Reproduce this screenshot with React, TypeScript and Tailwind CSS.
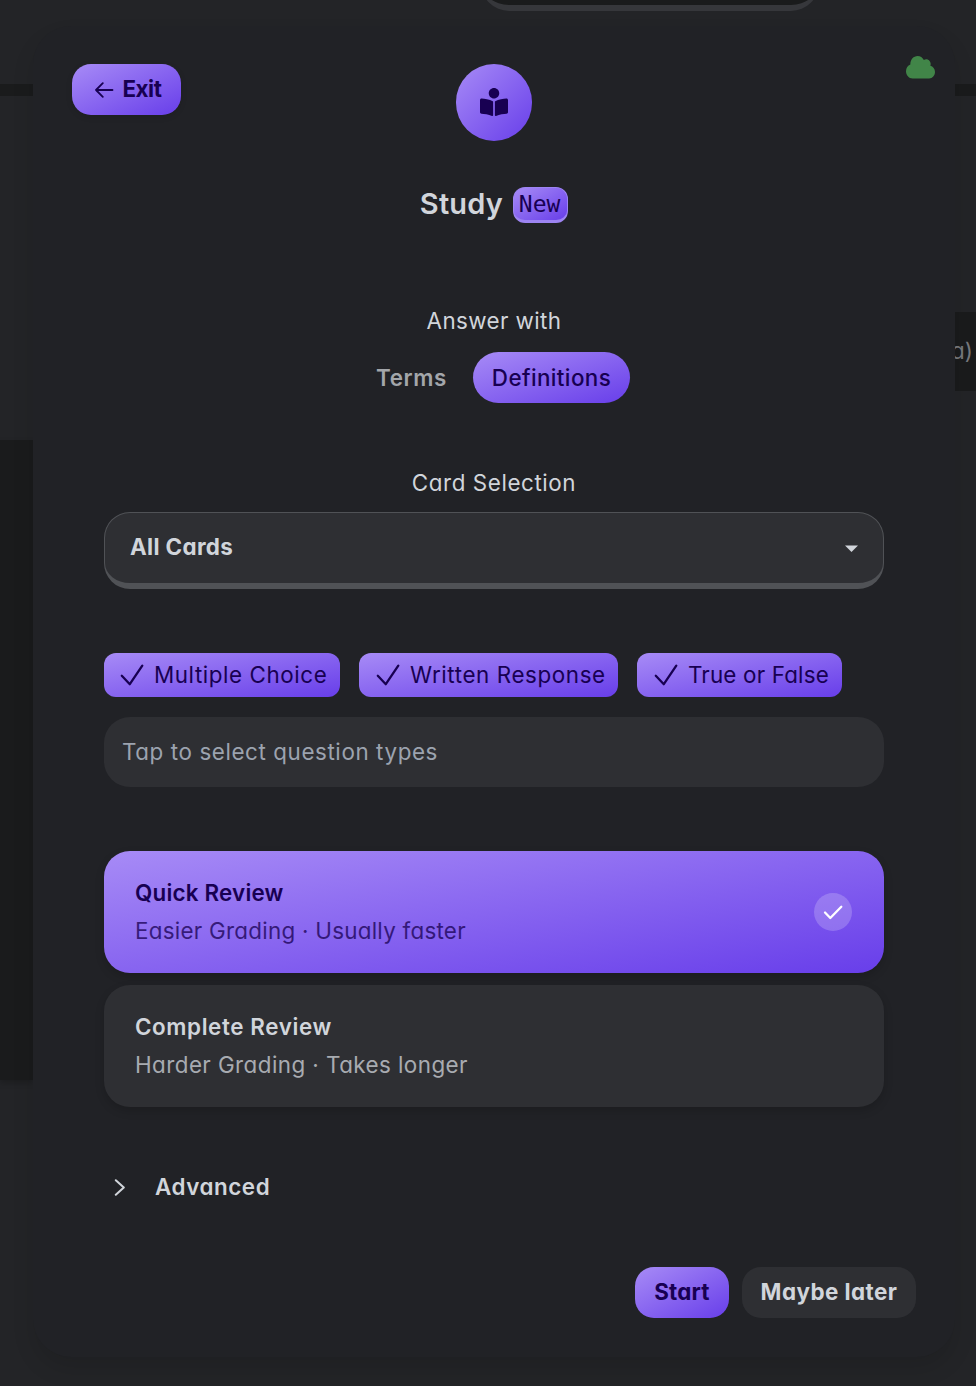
import { FaBookReader } from "react-icons/fa";

const GRADIENT = "bg-linear-to-br/srgb from-[#a78bf6] to-[#683eea] text-[#180052]";

function Tick() {
  return (
    <svg className="h-[22px] w-6 shrink-0" viewBox="0 0 24 22" fill="none" stroke="currentColor" strokeWidth="2.3" strokeLinecap="round" strokeLinejoin="round">
      <path d="M1.8 11.8 L9.8 20.2 L22.3 1.7" />
    </svg>
  );
}

function Chip({ label, className }: { label: string; className: string }) {
  return (
    <div className={`flex h-11 items-center gap-[10px] rounded-[12px] whitespace-nowrap ${GRADIENT} ${className}`}>
      <Tick />
      <span>{label}</span>
    </div>
  );
}

type OptionProps = {
  title: string;
  titleClass: string;
  note: string;
  noteClass: string;
  selected?: boolean;
};

function Option({ title, titleClass, note, noteClass, selected }: OptionProps) {
  return (
    <div className={`flex h-[122px] items-center justify-between rounded-[26px] pr-8 pl-[31px] shadow-[0_4px_10px_rgba(0,0,0,0.16)] ${selected ? GRADIENT : "bg-[#2e2f33] text-[#d1d5db]"}`}>
      <div className="flex flex-col gap-1 leading-[34px]">
        <div className={titleClass}>{title}</div>
        <div className={`opacity-75 ${noteClass}`}>{note}</div>
      </div>
      {selected && (
        <div className="flex size-[38px] items-center justify-center rounded-full bg-white/20 text-white">
          <svg className="mt-px h-[15px] w-[20px]" viewBox="0 0 20 15" fill="none" stroke="currentColor" strokeWidth="2.3" strokeLinecap="round" strokeLinejoin="round">
            <path d="M2 7.5 L7.3 13 L18.3 1.7" />
          </svg>
        </div>
      )}
    </div>
  );
}

function Backdrop() {
  return (
    <div className="absolute inset-0 flex justify-between">
      <div className="flex w-[33px] flex-col">
        <div className="mt-[84px] h-3 bg-[#1a1b1c]" />
        <div className="mt-[344px] h-[640px] bg-[#1a1b1c] shadow-[0_3px_6px_rgba(0,0,0,0.2)]" />
      </div>
      <div className="-mt-[60px] ml-[312px] h-[71px] w-[338px] rounded-[28px] border border-b-[6px] border-[#36373b] bg-[#1a1b1c]" />
      <div className="flex w-[21px] flex-col">
        <div className="mt-[84px] h-3 bg-[#1a1b1c]" />
        <div className="mt-[216px] flex h-[79px] items-center justify-end overflow-hidden bg-[#1a1b1c] pr-[3px] pb-0.5 text-[#77797d]">a)</div>
      </div>
    </div>
  );
}

export default function App() {
  return (
    <div className="relative h-[1386px] w-[976px] overflow-hidden bg-[#232427] pt-[26px] pl-[33px] font-['Inter',sans-serif] text-[22.4px] leading-[34px] text-[#d1d5db] [font-feature-settings:'cv11']">
      <Backdrop />
      <div className="relative flex h-[1331px] w-[922px] flex-col rounded-[38px] bg-[#212226] px-[39px] pt-[38px] shadow-[0_12px_22px_rgba(0,0,0,0.11)]">
        <header className="grid h-[77px] grid-cols-[1fr_76px_1fr] items-start">
          <button className={`flex h-[51px] w-[109px] items-center gap-[9px] rounded-[19px] pl-[21.5px] font-bold tracking-[-0.5px] shadow-[0_2px_6px_rgba(0,0,0,0.12)] ${GRADIENT}`}>
            <svg className="h-4 w-5 shrink-0" viewBox="0 0 20 16" fill="none" stroke="currentColor" strokeWidth="1.8" strokeLinecap="round" strokeLinejoin="round">
              <path d="M18.5 8 H2 M8.8 1.2 L2 8 L8.8 14.8" />
            </svg>
            <span className="pb-0.5">Exit</span>
          </button>
          <div className={`flex h-[77px] items-center justify-center rounded-full pb-px ${GRADIENT}`}>
            <FaBookReader size={28} />
          </div>
          <svg className="-mt-2 -mr-[18.5px] h-[22.5px] w-[29px] justify-self-end" viewBox="0 32 640 448" preserveAspectRatio="none">
            <path fill="#418548" d="M537.6 226.6c4.1-10.7 6.4-22.4 6.4-34.6 0-53-43-96-96-96-19.7 0-38.1 6-53.3 16.2C367 64.2 315.3 32 256 32c-88.4 0-160 71.6-160 160 0 2.7.1 5.4.2 8.1C40.2 219.8 0 273.2 0 336c0 79.5 64.5 144 144 144h368c70.7 0 128-57.3 128-128 0-61.9-44-113.6-102.4-125.4z" />
          </svg>
        </header>

        <div className="mt-[46px] flex h-9 items-center justify-center gap-[10px]">
          <h1 className="pb-0.5 text-[29px] font-semibold tracking-[0.2px]">Study</h1>
          <kbd className={`flex h-9 w-[55px] items-center justify-center rounded-[12px] border border-b-[3px] border-[#9d84f2] pr-0.5 font-['DejaVu_Sans_Mono',monospace] text-[23px] ${GRADIENT}`}>New</kbd>
        </div>

        <div className="mt-[81px] text-center tracking-[0.4px]">Answer with</div>
        <div className="mt-[14px] flex h-[51px] items-center pl-[304px] font-semibold">
          <span className="w-[97px] tracking-[0.6px] text-[#a3a6aa]">Terms</span>
          <div className={`flex h-[51px] w-[157px] items-center justify-center rounded-full font-medium tracking-[0.4px] ${GRADIENT}`}>Definitions</div>
        </div>

        <main className="flex flex-col px-8">
          <div className="mt-[63px] text-center tracking-[0.58px]">Card Selection</div>
          <div className="mt-3 flex h-[77px] items-center justify-between rounded-[26px] border border-b-[6px] border-[#505256] bg-[#2e2f33] px-[25px] font-bold">
            <span className="pb-0.5 tracking-[0.35px]">All Cards</span>
            <svg className="mt-[1px] h-[7px] w-[13px]" viewBox="0 0 13 7">
              <path fill="#d1d5db" d="M0 0.5h13L6.5 7z" />
            </svg>
          </div>

          <div className="mt-16 flex gap-[19px]">
            <Chip label="Multiple Choice" className="w-[236px] pl-4 tracking-[0.57px]" />
            <Chip label="Written Response" className="w-[259px] pl-[17px] tracking-[0.6px]" />
            <Chip label="True or False" className="w-[205px] pl-[17px] tracking-[0.17px]" />
          </div>
          <div className="mt-5 flex h-[70px] items-center rounded-[26px] bg-[#2e2f33] pl-[18px] tracking-[0.59px] text-[#9ca3af]">Tap to select question types</div>

          <div className="mt-16 flex flex-col gap-3">
            <Option title="Quick Review" titleClass="font-semibold tracking-[0.2px]" note="Easier Grading · Usually faster" noteClass="tracking-[0.26px]" selected />
            <Option title="Complete Review" titleClass="font-semibold tracking-[0.6px]" note="Harder Grading · Takes longer" noteClass="tracking-[0.44px]" />
          </div>

          <div className="mt-[63px] flex h-[34px] items-center gap-[29px] pl-[10px] font-semibold tracking-[0.55px]">
            <svg className="h-[17px] w-3" viewBox="0 0 12 17" fill="none" stroke="currentColor" strokeWidth="2" strokeLinecap="round" strokeLinejoin="round">
              <path d="M1.8 1.2 L9.8 8.5 L1.8 15.8" />
            </svg>
            <span>Advanced</span>
          </div>
        </main>

        <footer className="mt-[63px] flex justify-end gap-[13px] font-bold">
          <button className={`h-[51px] w-[94px] rounded-[19px] pb-0.5 tracking-[0.2px] ${GRADIENT}`}>Start</button>
          <button className="h-[51px] w-[174px] rounded-[19px] bg-[#2e2f33] pb-0.5 tracking-[0.45px]">Maybe later</button>
        </footer>
      </div>
    </div>
  );
}
